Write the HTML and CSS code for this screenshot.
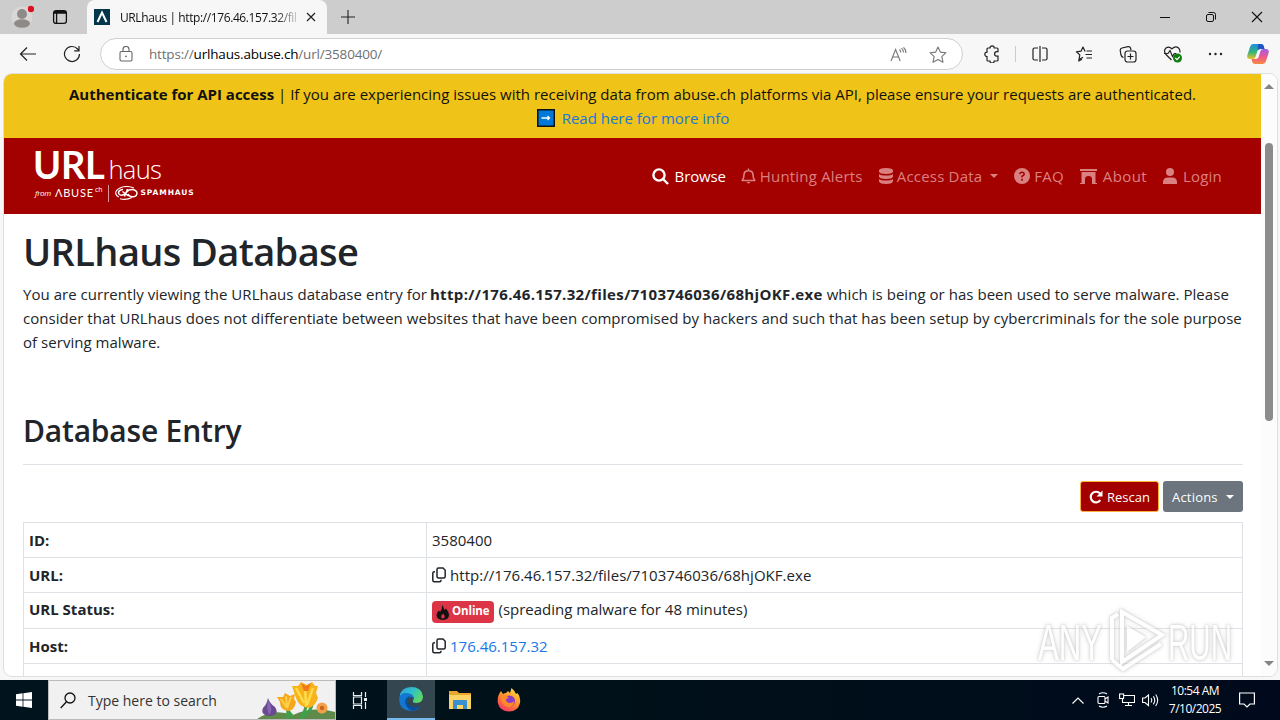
FILE: index.html
```html
<!DOCTYPE html>
<html lang="en">

<head>
    <meta charset="UTF-8">
    <meta name="viewport" content="width=device-width, initial-scale=1.0">
    <title>URLhaus | http://176.46.157.32/files/7103746036/68hjOKF.exe</title>
    <link rel="stylesheet" href="styles.css">
</head>

<body>
    <div class="browser">
        <!-- tabs -->
        <div class="tabbar">
            <div class="tabbar-left">
                <svg class="profile" width="24" height="28" viewBox="0 0 24 28">
                    <circle cx="12" cy="14" r="10.5" fill="#dad8d6" />
                    <circle cx="12" cy="11" r="5" fill="#8e8a87" />
                    <ellipse cx="12" cy="20.5" rx="8" ry="4.2" fill="#8e8a87" />
                    <circle cx="21" cy="6" r="3.2" fill="#d9101f" />
                </svg>
                <svg class="workspaces" width="16" height="16" viewBox="0 0 16 16" fill="none" stroke="#111" stroke-width="1.3">
                    <rect x="1.6" y="1.6" width="12.8" height="12.8" rx="2.4" />
                    <path d="M1.6 4h12.8M4.6 4v10" />
                    <path d="M2 3h12" stroke-width="2" />
                </svg>
            </div>
            <div class="tab">
                <svg width="16" height="16" viewBox="0 0 16 16">
                    <rect width="16" height="16" fill="#04374a" />
                    <path d="M3.500 13L8 3.500l4.500 9.500" fill="none" stroke="#fff" stroke-width="2" />
                </svg>
                <span class="tab-title">URLhaus | http://176.46.157.32/fil</span>
                <svg width="10" height="10" viewBox="0 0 10 10" stroke="#222" stroke-width="1.2">
                    <path d="M1 1l8 8M9 1L1 9" />
                </svg>
            </div>
            <svg class="new-tab" width="14" height="14" viewBox="0 0 14 14" stroke="#222" stroke-width="1.1">
                <path d="M7 0v14M0 7h14" />
            </svg>
            <div class="window-buttons">
                <svg width="12" height="12" viewBox="0 0 12 12" fill="none" stroke="#111">
                    <path d="M1 6.500h10" />
                </svg>
                <svg width="12" height="12" viewBox="0 0 12 12" fill="none" stroke="#111">
                    <rect x="1.5" y="3.5" width="7" height="7" rx="1.5" />
                    <path d="M3.500 1.500h5a2 2 0 0 1 2 2v5" />
                </svg>
                <svg width="12" height="12" viewBox="0 0 12 12" fill="none" stroke="#111" stroke-width="1.1">
                    <path d="M1 1l10 10M11 1L1 11" />
                </svg>
            </div>
        </div>

        <!-- address bar -->
        <div class="toolbar">
            <svg class="back" width="18" height="16" viewBox="0 0 18 16" fill="none" stroke="#222" stroke-width="1.2">
                <path d="M17 8H1.500M8 1.500L1.500 8 8 14.500" />
            </svg>
            <svg class="reload" width="18" height="18" viewBox="0 0 18 18" fill="none" stroke="#222" stroke-width="1.2">
                <path d="M16.500 9A7.500 7.500 0 1 1 14.600 4L16 5.500M16 1v4.800h-4.800" />
            </svg>
            <div class="address">
                <svg width="14" height="16" viewBox="0 0 14 16" fill="none" stroke="#666" stroke-width="1.1">
                    <rect x="1" y="5.5" width="12" height="9.5" rx="1.5" />
                    <path d="M4 5.500V3.500a3 3 0 0 1 6 0v2" />
                    <circle cx="7" cy="10.3" r="0.9" fill="#666" stroke="none" />
                </svg>
                <span class="url">https://<b>urlhaus.abuse.ch</b>/url/3580400/</span>
                <svg class="read" width="17" height="15" viewBox="0 0 17 15" fill="none" stroke="#777" stroke-width="1.1">
                    <path d="M1 14L5.600 2.500 10.200 14M2.700 10h5.800M9.500 2.500q1.300 1.200 1.300 3M11.500 1.200q2 1.800 2 4.300M13.500.3q2.400 2.200 2.400 5.700" />
                </svg>
                <svg width="18" height="17" viewBox="0 0 18 17" fill="none" stroke="#777" stroke-width="1.1" stroke-linejoin="round">
                    <path d="M9 1l2.300 5.100 5.700.6-4.200 3.900 1.200 5.600L9 13.400l-5 2.800 1.200-5.600L1 6.700l5.700-.6z" />
                </svg>
            </div>
            <div class="tools">
                <svg width="18" height="18" viewBox="0 0 18 18" fill="none" stroke="#222" stroke-width="1.2">
                    <path d="M5 3h2a2.100 2.100 0 0 1 4.200 0H14q1 0 1 1v2.700h-1.200a2.200 2.200 0 0 0 0 4.400H15V15q0 1-1 1h-2.800a2.100 2.100 0 0 1-4.200 0H5q-1 0-1-1v-3.400a2.200 2.200 0 0 1 0-4.500V4q0-1 1-1z" />
                </svg>
                <span class="divider"></span>
                <svg width="18" height="18" viewBox="0 0 18 18" fill="none" stroke="#222" stroke-width="1.2">
                    <path d="M7 3H3.500Q2 3 2 4.500v9Q2 15 3.500 15H7M9 1v16M11 3h3.500Q16 3 16 4.500v9q0 1.500-1.500 1.500H11" />
                </svg>
                <svg width="18" height="18" viewBox="0 0 18 18" fill="none" stroke="#222" stroke-width="1.2" stroke-linejoin="round">
                    <path d="M10.500 6H9.800L8 2 6 6.200l-4.600.6 3.400 3.100L4 14.500l4-2.200M11.500 6H17M10.500 9.500H17M11.500 13H17M4 14.500L3.700 16l3.300-1.700" />
                </svg>
                <svg width="18" height="18" viewBox="0 0 18 18" fill="none" stroke="#222" stroke-width="1.2">
                    <path d="M4.500 12.500Q2.500 12 2 10L1.200 5.500Q1 3.500 3 3l6-1.400q2-.4 2.500 1.400l.5 2" />
                    <rect x="6" y="6" width="11" height="11" rx="2.5" />
                    <path d="M11.500 8.500v6M8.500 11.500h6" />
                </svg>
                <svg width="20" height="18" viewBox="0 0 20 18" fill="none" stroke="#222" stroke-width="1.2">
                    <path d="M8.500 15L3 9.500Q0 5.800 3 3q3-2.200 6 .8Q12.500.5 15.500 3q2 2 1.300 4.500M1 8.500h4l2-3 2.500 6 1.800-3h2" />
                    <circle cx="14.5" cy="13" r="4.5" fill="#107c10" stroke="none" />
                    <path d="M12.300 13l1.700 1.600 2.800-3" stroke="#fff" />
                </svg>
                <svg class="dots" width="16" height="18" viewBox="0 0 16 18" fill="#222">
                    <circle cx="3" cy="9" r="1.2" />
                    <circle cx="8.5" cy="9" r="1.2" />
                    <circle cx="14" cy="9" r="1.2" />
                </svg>
                <svg class="copilot" width="22" height="20" viewBox="0 0 22 20">
                    <defs>
                        <linearGradient id="cpl" x1="0" y1="0" x2="0" y2="1">
                            <stop offset="0" stop-color="#1a8fe0" />
                            <stop offset=".55" stop-color="#35b57a" />
                            <stop offset="1" stop-color="#f0c020" />
                        </linearGradient>
                        <linearGradient id="cpr" x1="0" y1="0" x2="0" y2="1">
                            <stop offset="0" stop-color="#a45be8" />
                            <stop offset=".55" stop-color="#ee5a8a" />
                            <stop offset="1" stop-color="#f98a3c" />
                        </linearGradient>
                    </defs>
                    <path d="M6 0h8q2 0 2.700 2L17.500 5H13q-2 0-2.600 2L8.500 13q-.6 2-2.600 2H3q-3.500 0-2.600-4L3 3q1-3 3-3z" fill="url(#cpl)" />
                    <path d="M11 0h3q2 0 2.700 2L17.500 5H13q-1.600 0-2.300 1.600z" fill="#1b55c8" />
                    <path d="M16 20H8q-2 0-2.700-2L4.500 15H9q2 0 2.600-2L13.500 7q.6-2 2.600-2H19q3.500 0 2.600 4L19 17q-1 3-3 3z" fill="url(#cpr)" />
                </svg>
            </div>
        </div>

        <!-- page -->
        <div class="viewport">
            <div class="page">
                <div class="notice">
                    <p class="notice-main"><b>Authenticate for API access</b> | If you are experiencing issues with receiving data from abuse.ch platforms via API, please ensure your requests are authenticated.</p>
                    <p class="notice-more">
                        <svg width="18" height="18" viewBox="0 0 18 18">
                            <rect x="0.75" y="0.75" width="16.5" height="16.5" fill="#0078d7" stroke="#111" stroke-width="1.5" />
                            <path d="M4.500 9h8M10.500 7l2 2-2 2" fill="none" stroke="#fff" stroke-width="1.3" />
                        </svg>
                        <a>Read here for more info</a>
                    </p>
                </div>

                <div class="navbar">
                    <div class="brand">
                        <div class="brand-top"><b>URL</b><span>haus</span></div>
                        <div class="brand-bottom">
                            <i>from</i>
                            <span class="abuse">ΛBUSE</span>
                            <span class="abuse-ch">ch</span>
                            <span class="brand-line"></span>
                            <svg width="23" height="14" viewBox="0 0 23 14" fill="none" stroke="#fff" stroke-width="1.1">
                                <path d="M19 2Q11-1 5 2 0 4.500.8 8q.8 2 3 3M5 12.700q6 1.800 12-1.200" />
                                <path d="M8 3.500Q3.500 4 3.500 7 5 10.500 9 8.500l5-4.500q5-1.500 7.500 1.500 1.500 3.500-2 5-5 1-6.500-2.500M7.500 5.500l6 4.500M12.500 3l-3 7.500" stroke-width="1.5" />
                            </svg>
                            <span class="spamhaus">SPAMHAUS</span>
                        </div>
                    </div>
                    <div class="menu">
                        <a class="menu-item active">
                            <svg width="17" height="17" viewBox="0 0 17 17" fill="none" stroke="#fff" stroke-width="2.4">
                                <circle cx="7" cy="7" r="5.6" />
                                <path d="M11 11l5 5" />
                            </svg>
                            <span>Browse</span>
                        </a>
                        <a class="menu-item">
                            <svg width="15" height="17" viewBox="0 0 15 17" fill="none" stroke="#da8080" stroke-width="1.6">
                                <path d="M7.500.5v2M1.200 12.500Q3 10 3 7q0-4.300 4.500-4.300T12 7q0 3 1.800 5.500z" stroke-linejoin="round" />
                                <path d="M5.600 14a2 2 0 0 0 3.800 0z" fill="#da8080" stroke="none" />
                            </svg>
                            <span>Hunting Alerts</span>
                        </a>
                        <a class="menu-item">
                            <svg width="14" height="16" viewBox="0 0 14 16" fill="#da8080">
                                <path d="M0 2.500Q0 0 7 0t7 2.500v1.300Q13 6 7 6T0 3.800zM0 6q2 1.500 7 1.500T14 6v2.800Q13 11 7 11T0 8.800zM0 11q2 1.500 7 1.500t7-1.500v2.500Q13 16 7 16t-7-2.500z" />
                            </svg>
                            <span>Access Data</span>
                            <i class="caret"></i>
                        </a>
                        <a class="menu-item">
                            <svg width="16" height="16" viewBox="0 0 16 16">
                                <circle cx="8" cy="8" r="8" fill="#da8080" />
                                <path d="M5.800 6.200Q6 4.300 8 4.300t2.200 1.900Q10.200 7.300 8 8.200v1.300" fill="none" stroke="#a30000" stroke-width="1.5" />
                                <circle cx="8" cy="11.7" r="1" fill="#a30000" />
                            </svg>
                            <span>FAQ</span>
                        </a>
                        <a class="menu-item about">
                            <svg width="17" height="15" viewBox="0 0 17 15" fill="#da8080">
                                <path d="M0 0h17v2H0zM1.500 3h14v11h1.500v1h-5v-5q0-3-3.500-3T5 10v5H0v-1h1.500z" />
                            </svg>
                            <span>About</span>
                        </a>
                        <a class="menu-item login">
                            <svg width="14" height="16" viewBox="0 0 14 16" fill="#da8080">
                                <circle cx="7" cy="4" r="4" />
                                <path d="M0 16v-1.500Q0 9.500 5 9.500h4q5 0 5 5V16z" />
                            </svg>
                            <span>Login</span>
                        </a>
                    </div>
                </div>

                <div class="content">
                    <h1>URLhaus Database</h1>
                    <div class="intro">
                        <p>You are currently viewing the URLhaus database entry for <b>http://176.46.157.32/files/7103746036/68hjOKF.exe</b> which is being or has been used to serve malware. Please</p>
                        <p>consider that URLhaus does not differentiate between websites that have been compromised by hackers and such that has been setup by cybercriminals for the sole purpose</p>
                        <p>of serving malware.</p>
                    </div>
                    <h2>Database Entry</h2>
                    <div class="buttons">
                        <a class="btn btn-rescan">
                            <svg width="14" height="14" viewBox="0 0 14 14" fill="none" stroke="#fff" stroke-width="2.2">
                                <path d="M11.300 10.200A5.300 5.300 0 1 1 11 3.500L12.500 5" />
                                <path d="M13.500.5v6h-6z" fill="#fff" stroke="none" />
                            </svg>
                            <span>Rescan</span>
                        </a>
                        <a class="btn btn-actions"><span>Actions</span><i class="caret"></i></a>
                    </div>
                    <table class="entry">
                        <tr>
                            <th>ID:</th>
                            <td>3580400</td>
                        </tr>
                        <tr>
                            <th>URL:</th>
                            <td>
                                <div class="cell">
                                    <svg width="14" height="16" viewBox="0 0 14 16" fill="none" stroke="#212529" stroke-width="1.5">
                                        <path d="M6.500 1H11l2.200 2.200V9.500q0 1.500-1.500 1.500H6.500Q5 11 5 9.500v-7Q5 1 6.500 1zM3 4.800H2.300Q.8 4.800.8 6.300v7q0 1.500 1.500 1.500h5.200q1.500 0 1.500-1.500v-.5" />
                                    </svg>
                                    <span class="cell-url">http://176.46.157.32/files/7103746036/68hjOKF.exe</span>
                                </div>
                            </td>
                        </tr>
                        <tr class="row-status">
                            <th>URL Status:</th>
                            <td>
                                <div class="cell">
                                    <span class="badge">
                                        <svg width="13" height="15" viewBox="0 0 13 15">
                                            <path d="M6 0Q8 2 8.300 5L10 3.500q3 3.500 3 6.500 0 4.500-6 5-6.500-.3-6.500-5Q.8 7 3 5.500L4 7Q6.500 4 6 0z" fill="#111" />
                                            <path d="M7 8.500q3 3 1 4.700-2.500.8-3-1.200Q5 10.500 7 8.500z" fill="#dc3545" />
                                        </svg>
                                        Online
                                    </span>
                                    <span class="spreading">(spreading malware for 48 minutes)</span>
                                </div>
                            </td>
                        </tr>
                        <tr>
                            <th>Host:</th>
                            <td>
                                <div class="cell">
                                    <svg width="14" height="16" viewBox="0 0 14 16" fill="none" stroke="#212529" stroke-width="1.5">
                                        <path d="M6.500 1H11l2.200 2.200V9.500q0 1.500-1.500 1.500H6.500Q5 11 5 9.500v-7Q5 1 6.500 1zM3 4.800H2.300Q.8 4.800.8 6.300v7q0 1.500 1.500 1.500h5.200q1.500 0 1.500-1.500v-.5" />
                                    </svg>
                                    <a class="host">176.46.157.32</a>
                                </div>
                            </td>
                        </tr>
                        <tr class="row-date">
                            <th>Date added:</th>
                            <td></td>
                        </tr>
                    </table>
                </div>
            </div>
            <div class="scrollbar">
                <i class="arrow-up"></i>
                <div class="thumb"></div>
                <i class="arrow-down"></i>
            </div>
        </div>
    </div>

    <!-- watermark over the page -->
    <svg class="watermark" width="204" height="76" viewBox="0 0 204 76">
        <text x="5" y="57" textLength="64" lengthAdjust="spacingAndGlyphs">ANY</text>
        <text x="135" y="57" textLength="64" lengthAdjust="spacingAndGlyphs">RUN</text>
        <g fill="none" stroke="#fff" stroke-width="4">
            <path d="M79 57V15l6-4M79 57l11 9 38-25" />
            <path d="M89 9v50l40-27z" />
            <path d="M94 23v26l19-15z" fill="#fff" stroke="none" />
        </g>
    </svg>

    <!-- taskbar -->
    <div class="taskbar">
        <div class="start">
            <svg width="16" height="16" viewBox="0 0 16 16" fill="#fff">
                <path d="M0 2.200L6.600 1.300v6.300H0zM7.400 1.200L16 0v7.600H7.400zM0 8.400h6.600v6.300L0 13.800zM7.400 8.400H16V16l-8.600-1.200z" />
            </svg>
        </div>
        <div class="search">
            <svg class="search-icon" width="16" height="17" viewBox="0 0 16 17" fill="none" stroke="#111" stroke-width="1.3">
                <circle cx="10" cy="6" r="5" />
                <path d="M6.500 9.800L.7 16" />
            </svg>
            <span>Type here to search</span>
            <svg class="flowers" width="80" height="38" viewBox="0 0 80 38">
                <path d="M2 38Q18 27 38 34 58 25 80 31v7z" fill="#5f8a49" />
                <path d="M34 22q-2 8-1 16M52 20q-1 9-6 18M38 36q-7-8-8-13M48 36q7-5 9-12" stroke="#3fa04b" stroke-width="3" fill="none" />
                <path d="M13 17Q15 23 20 26q5 8-5 9-10-1-7-8 4-4 5-10z" fill="#674a91" />
                <path d="M13 19q-2 7 1 15 5-5-1-15z" fill="#8a65b5" />
                <path d="M22 16l6 0 2-4 5 3 5-2-1 5 2 3q-2 9-8 9-8-1-8-9z" fill="#f5a81d" />
                <path d="M31 15l1 12 4-11M26 18l6 9" stroke="#fdd047" stroke-width="2" fill="none" />
                <path d="M37 5l6 0 3-4 6 3 5-3 3 4 3 0-2 7 2 5q-3 9-10 10-9-1-12-10z" fill="#f8b21c" />
                <path d="M41 7l8 15M50 5l1 20M58 7l-6 17" stroke="#ffdc4a" stroke-width="2.5" fill="none" />
                <path d="M46 2l5 3 5-3-3 8h-4z" fill="#ee7a1c" />
                <circle cx="67" cy="27" r="5.5" fill="#f4a04a" />
                <circle cx="67" cy="27" r="2.2" fill="#c8641e" />
            </svg>
        </div>
        <div class="task task-view">
            <svg width="16" height="17" viewBox="0 0 16 17" fill="none" stroke="#e8eef2" stroke-width="1.2">
                <path d="M1.500 0v3.500h8V0M1.500 17v-3.500h8V17M1.500 5v7h8V5zM13.500 0v5M13.500 10v7" />
                <path d="M12 7.500h3" stroke-width="3" />
            </svg>
        </div>
        <div class="task task-active">
            <svg width="24" height="24" viewBox="0 0 24 24">
                <defs>
                    <linearGradient id="edge" x1="0" y1="0" x2="1" y2=".5">
                        <stop offset="0" stop-color="#2b9fe0" />
                        <stop offset=".55" stop-color="#2fc0c8" />
                        <stop offset="1" stop-color="#5bd868" />
                    </linearGradient>
                </defs>
                <path d="M.5 10Q2 0 12 0q11 0 12 9.500 0 6-6.500 6.500-4.500 0-3.500-2.500 2-3-1-5.500Q9 5.500.5 10z" fill="url(#edge)" />
                <path d="M.5 10.500Q2 5.500 8 6q6 .6 6.500 5-4-2.500-6 1.500Q7 18 13 20.500q5 1 8.500-1.500Q18 24 12 24 1 23.500 0 13z" fill="#1377d2" />
                <path d="M9.500 9.500Q5 12 6.500 17q2 5.500 7 6.800 5-.8 8-5-4 2-8.500.7Q8 17 8.500 12.500q1-2.500 4-2.500z" fill="#0b4d99" />
            </svg>
        </div>
        <div class="task">
            <svg width="22" height="20" viewBox="0 0 22 20">
                <path d="M0 1h8l2 2h12v16H0z" fill="#e9a72c" />
                <path d="M0 5h22v14H0z" fill="#fbd467" />
                <path d="M4 19v-8q0-1 1-1h12q1 0 1 1v8h-4v-4H8v4z" fill="#3a8fd0" />
            </svg>
        </div>
        <div class="task">
            <svg width="24" height="24" viewBox="0 0 24 24">
                <defs>
                    <linearGradient id="fox" x1=".8" y1="0" x2=".2" y2="1">
                        <stop offset="0" stop-color="#ffe23d" />
                        <stop offset=".5" stop-color="#ff8a2a" />
                        <stop offset="1" stop-color="#f5316b" />
                    </linearGradient>
                </defs>
                <path d="M4 3l2 3q1.500-1 3-1L11 3l2 2 1.500-5Q18 3 19 6l1.500-1Q24 9 23 15q-2 8.500-11 8.500T.800 15Q0 8 4 3z" fill="url(#fox)" />
                <circle cx="12.5" cy="13" r="5.5" fill="#8a3cc8" />
                <path d="M4 8q5-2 8 2-3 0-3 2 0 2 3 3 3 .5 5-2 0 6-6 6Q4 18 4 8z" fill="#ff8a2a" />
            </svg>
        </div>
        <div class="tray">
            <svg width="12" height="7" viewBox="0 0 12 7" fill="none" stroke="#fff" stroke-width="1.2">
                <path d="M.5 6.500L6 1l5.500 5.500" />
            </svg>
            <svg class="tray-meet" width="12" height="16" viewBox="0 0 12 16" fill="none" stroke="#fff" stroke-width="1.1">
                <rect x="1" y="4.5" width="7" height="7" rx="1" />
                <path d="M8 7l3-2v6L8 9M2 2q4-2.500 8 0M2 14q4 2.500 8 0" />
            </svg>
            <svg class="tray-net" width="16" height="14" viewBox="0 0 16 14" fill="none" stroke="#fff" stroke-width="1.1">
                <path d="M5 2.500h10.500v7H3.500V6M9.500 9.500v3M6 12.500h7" />
                <rect x=".6" y="1" width="4" height="4.5" />
            </svg>
            <svg class="tray-sound" width="17" height="14" viewBox="0 0 17 14" fill="none" stroke="#fff" stroke-width="1.1">
                <path d="M.6 5v4.500H3l3.500 3V2L3 5zM9 5q1.500 2 0 4.500M11.300 3.300q3 4 0 8M13.700 1.500q4 5.500 0 11.500" />
            </svg>
            <div class="clock">
                <span>10:54 AM</span>
                <span>7/10/2025</span>
            </div>
            <svg class="tray-note" width="16" height="16" viewBox="0 0 16 16" fill="none" stroke="#fff" stroke-width="1.2">
                <path d="M.6 1h14.800v11H11l-3 3-3-3H.6z" />
            </svg>
        </div>
    </div>
</body>

</html>
```

FILE: styles.css
```css
*,
*::before,
*::after {
    box-sizing: border-box;
}

body {
    margin: 0;
    width: 1280px;
    height: 720px;
    overflow: hidden;
    position: relative;
    font-family: "Open Sans", "Noto Sans", sans-serif;
    color: #212529;
}

p,
h1,
h2 {
    margin: 0;
}

svg {
    display: block;
    flex-shrink: 0;
}

.browser {
    height: 680px;
    display: flex;
    flex-direction: column;
    background-color: #f7f7f7;
}

/* tabs */
.tabbar {
    height: 34px;
    display: flex;
    align-items: center;
    background-color: #cdcdcd;
}

.tabbar-left {
    width: 87px;
    height: 34px;
    padding: 3px 0 0 10px;
    display: flex;
    gap: 18px;
}

.workspaces {
    margin-top: 6px;
}

.tab {
    width: 240px;
    height: 34px;
    padding: 0 11px 0 7px;
    display: flex;
    align-items: center;
    border-radius: 8px 8px 0 0;
    background-color: #f7f7f7;
}

.tab-title {
    width: 177px;
    margin: 0 9px 0 10px;
    white-space: nowrap;
    font-size: 12px;
    letter-spacing: -0.4px;
    color: #111;
    -webkit-mask-image: linear-gradient(to right, #000 155px, transparent 182px);
    mask-image: linear-gradient(to right, #000 155px, transparent 182px);
}

.new-tab {
    margin-left: 14px;
}

.window-buttons {
    margin-left: auto;
    padding-right: 17px;
    display: flex;
    gap: 34px;
}

/* address bar */
.toolbar {
    height: 40px;
    display: flex;
    align-items: center;
    padding-left: 19px;
}

.reload {
    margin-left: 26px;
}

.address {
    width: 863px;
    height: 32px;
    margin-left: 19px;
    padding: 0 15px 0 18px;
    display: flex;
    align-items: center;
    border: 1px solid #d0d0d0;
    border-radius: 16px;
    background-color: #fff;
}

.url {
    margin-left: 16px;
    font-size: 13.5px;
    letter-spacing: -0.18px;
    color: #707070;
}

.url b {
    font-weight: 400;
    color: #000;
}

.read {
    margin: 0 22px 0 auto;
}

.tools {
    flex: 1;
    display: flex;
    align-items: center;
    gap: 26px;
    padding-left: 20px;
}

.divider {
    width: 1px;
    height: 16px;
    margin: 0 -11px 0 -12px;
    background-color: #ccc;
}

.dots,
.copilot {
    margin-left: -2px;
}

/* page */
.viewport {
    width: 1273px;
    height: 602px;
    margin-left: 4px;
    display: flex;
    overflow: hidden;
    border-radius: 8px;
    background-color: #fff;
    box-shadow: 0 0 0 1px #dedede;
}

.page {
    width: 1257px;
    height: 602px;
    overflow: hidden;
    white-space: nowrap;
    font-size: 15px;
    line-height: 24px;
}

.notice {
    height: 64px;
    padding-top: 8px;
    background-color: #efc318;
    color: #111;
}

.notice-main {
    text-align: center;
}

.notice-more {
    display: flex;
    justify-content: center;
    align-items: center;
    gap: 7px;
    padding-left: 1px;
}

.notice-more a {
    color: #1877d9;
}

.navbar {
    height: 76px;
    padding: 0 39px 0 30px;
    display: flex;
    justify-content: space-between;
    background-color: #a30000;
}

.brand {
    padding-top: 8px;
    color: #fff;
}

.brand-top {
    height: 38px;
    display: flex;
    align-items: baseline;
    line-height: 37px;
}

.brand-top b {
    margin-left: -1px;
    font-size: 38px;
    font-family: Lato, sans-serif;
    letter-spacing: -0.3px;
}

.brand-top span {
    margin-left: 4px;
    font-size: 25.5px;
    font-weight: 300;
    letter-spacing: -0.7px;
}

.brand-bottom {
    height: 18px;
    display: flex;
    align-items: center;
    line-height: 18px;
}

.brand-bottom i {
    margin-left: 1px;
    font-size: 8px;
    letter-spacing: -0.3px;
}

.abuse {
    margin-left: 4px;
    font-size: 11px;
    font-family: Lato, sans-serif;
    letter-spacing: 0.8px;
}

.abuse-ch {
    align-self: flex-start;
    margin-left: 1px;
    font-size: 7px;
    line-height: 11px;
}

.brand-line {
    width: 1px;
    height: 17px;
    margin: 0 6px 0 5px;
    background-color: #d99;
}

.spamhaus {
    margin-left: 3px;
    font-size: 7.5px;
    font-weight: 700;
    font-family: "DejaVu Sans", sans-serif;
    letter-spacing: 0.9px;
}

.menu {
    display: flex;
    align-items: center;
    gap: 16px;
    letter-spacing: 0.2px;
    color: #da8080;
}

.menu-item {
    display: flex;
    align-items: center;
    gap: 4px;
}

.active {
    margin-right: -1px;
    color: #fff;
    gap: 6px;
    letter-spacing: -0.15px;
}

.about,
.login {
    gap: 6px;
}

.about {
    letter-spacing: 0.4px;
}

.caret {
    margin-left: 4px;
    border: 4px solid transparent;
    border-top-color: currentColor;
    border-bottom: 0;
}

.content {
    padding: 13px 18px 0 19px;
}

/* medium weight is made from the semibold face */
h1,
h2 {
    font-weight: 600;
}

h1 {
    height: 48px;
    line-height: 48px;
    font-size: 38px;
    letter-spacing: -0.6px;
}

.intro {
    padding-top: 7px;
    letter-spacing: 0.035px;
}

.intro b {
    margin-left: -1px;
    letter-spacing: 0.35px;
}

h2 {
    margin-top: 58px;
    padding-bottom: 14px;
    border-bottom: 1px solid #dee2e6;
    line-height: 38px;
    font-size: 30px;
    letter-spacing: -0.2px;
}

.buttons {
    margin: 16px 0 10px;
    display: flex;
    justify-content: flex-end;
    gap: 4px;
}

.btn {
    height: 31px;
    display: flex;
    align-items: center;
    border-radius: 3px;
    font-size: 13px;
    color: #fff;
}

.btn-rescan {
    width: 79px;
    padding-left: 8px;
    gap: 4px;
    border: 1px solid #ffb13b;
    background-color: #a30000;
}

.btn-actions {
    width: 80px;
    padding-left: 9px;
    letter-spacing: 0.2px;
    background-color: #6c757d;
}

.btn-actions .caret {
    margin-left: 8px;
}

.entry {
    width: 1220px;
    table-layout: fixed;
    border-collapse: collapse;
}

.entry th,
.entry td {
    height: 35px;
    padding: 0 5px;
    border: 1px solid #dee2e6;
    text-align: left;
}

.entry th {
    width: 403px;
}

.row-status th {
    height: 36px;
    padding-bottom: 3px;
}

.row-date th {
    padding-bottom: 1px;
    letter-spacing: -0.7px;
}

.cell {
    display: flex;
    align-items: center;
    gap: 4px;
}

.cell-url {
    letter-spacing: 0.04px;
}

.badge {
    height: 22px;
    margin-top: 3px;
    padding: 0 5px 2px 4px;
    display: flex;
    align-items: center;
    gap: 3px;
    border-radius: 4px;
    font-size: 11.5px;
    font-weight: 700;
    letter-spacing: -0.1px;
    color: #fff;
    background-color: #dc3545;
}

.badge svg {
    margin-top: 3px;
}

.spreading {
    margin-top: -3px;
}

.host {
    color: #1877e8;
}

.scrollbar {
    width: 16px;
    height: 602px;
    padding: 10px 0;
    display: flex;
    flex-direction: column;
    align-items: center;
    background-color: #fcfcfc;
}

.arrow-up,
.arrow-down {
    border: 5px solid transparent;
}

.arrow-up {
    border-top: 0;
    border-bottom-color: #858585;
}

.arrow-down {
    margin-top: auto;
    border-bottom: 0;
    border-top-color: #858585;
}

.thumb {
    width: 8px;
    height: 278px;
    margin-top: 54px;
    border-radius: 4px;
    background-color: #8b8b8b;
}

.watermark {
    position: absolute;
    left: 1033px;
    top: 603px;
    font-family: "Liberation Sans", sans-serif;
    font-size: 50px;
    fill: #fff;
    opacity: 0.7;
    filter: drop-shadow(0 0 1px #bbb) drop-shadow(0 0 2px #ccc);
}

/* taskbar */
.taskbar {
    height: 40px;
    display: flex;
    background: linear-gradient(to right, #00141d, #001019 50%, #000a1c);
    color: #fff;
}

.start {
    width: 48px;
    display: flex;
    align-items: center;
    justify-content: center;
    padding-right: 1px;
}

.search {
    width: 288px;
    display: flex;
    align-items: center;
    border: 1px solid #bbb;
    background-color: #f1f1f1;
    color: #333;
    font-size: 14px;
}

.search-icon {
    margin: 0 12px 0 11px;
}

.flowers {
    margin-left: auto;
}

.task {
    width: 49px;
    display: flex;
    align-items: center;
    justify-content: center;
}

.task-view {
    width: 51px;
    padding-right: 3px;
}

.task-active {
    width: 48px;
    border-bottom: 2px solid #76b9ed;
    background-color: #34464f;
}

.tray {
    margin-left: auto;
    padding-right: 25px;
    display: flex;
    align-items: center;
}

.tray-meet {
    margin-left: 13px;
}

.tray-net {
    margin-left: 10px;
}

.tray-sound {
    margin-left: 7px;
}

.clock {
    width: 56px;
    margin: 0 16px 0 8px;
    display: flex;
    flex-direction: column;
    text-align: center;
    white-space: nowrap;
    line-height: 18px;
    font-size: 12px;
    letter-spacing: -0.5px;
}
```
